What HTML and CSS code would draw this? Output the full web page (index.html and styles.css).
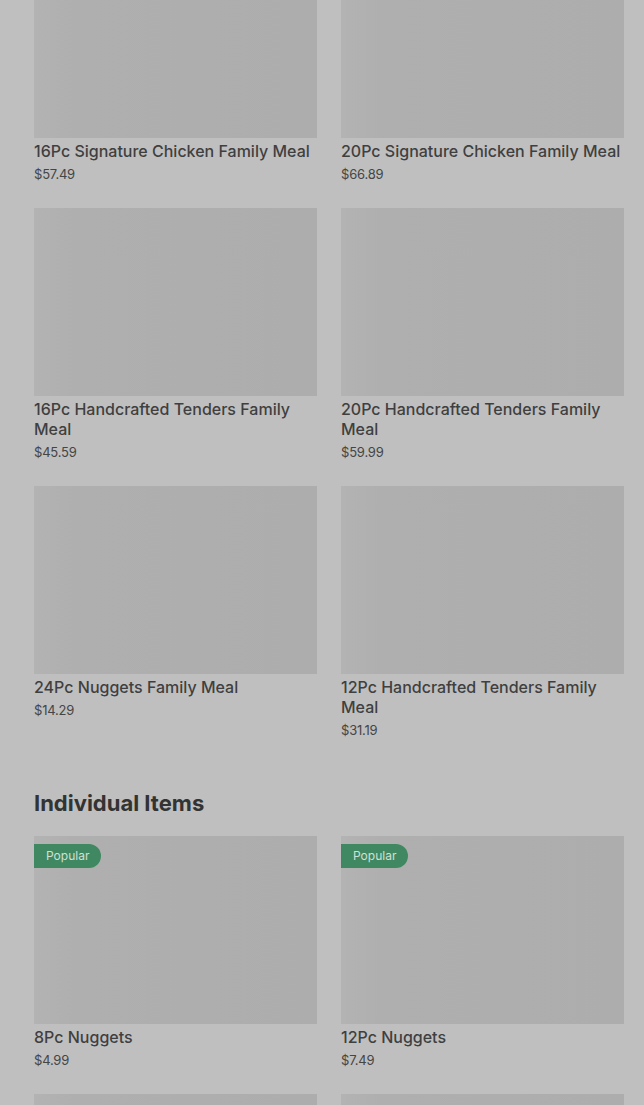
FILE: index.html
```html
<!DOCTYPE html>
<html>
<head>
<meta charset="utf-8">
<link rel="stylesheet" href="styles.css">
</head>
<body>
<main class="page">
  <div class="grid first">
    <div class="card"><div class="thumb"></div><div class="title">16Pc Signature Chicken Family Meal</div><div class="price">$57.49</div></div>
    <div class="card"><div class="thumb"></div><div class="title">20Pc Signature Chicken Family Meal</div><div class="price">$66.89</div></div>
    <div class="card"><div class="thumb"></div><div class="title">16Pc Handcrafted Tenders Family Meal</div><div class="price">$45.59</div></div>
    <div class="card"><div class="thumb"></div><div class="title">20Pc Handcrafted Tenders Family Meal</div><div class="price">$59.99</div></div>
    <div class="card"><div class="thumb"></div><div class="title">24Pc Nuggets Family Meal</div><div class="price">$14.29</div></div>
    <div class="card"><div class="thumb"></div><div class="title">12Pc Handcrafted Tenders Family Meal</div><div class="price">$31.19</div></div>
  </div>
  <h2 class="section-title">Individual Items</h2>
  <div class="grid">
    <div class="card"><div class="thumb"><span class="badge">Popular</span></div><div class="title">8Pc Nuggets</div><div class="price">$4.99</div></div>
    <div class="card"><div class="thumb"><span class="badge">Popular</span></div><div class="title">12Pc Nuggets</div><div class="price">$7.49</div></div>
    <div class="card"><div class="thumb"></div><div class="title">&nbsp;</div><div class="price">&nbsp;</div></div>
    <div class="card"><div class="thumb"></div><div class="title">&nbsp;</div><div class="price">&nbsp;</div></div>
  </div>
</main>
</body>
</html>
```
FILE: styles.css
```css
html, body {
  margin: 0;
  padding: 0;
  background: #bfbfbf;
  overflow: hidden;
  height: 1105px;
}
.page {
  padding: 0 20px 0 34px;
  font-family: Inter, "Liberation Sans", sans-serif;
  color: #3d3d3d;
}
.grid {
  display: grid;
  grid-template-columns: 283px 283px;
  column-gap: 24px;
  row-gap: 24px;
}
.grid.first {
  margin-top: -50px;
}
.card {
  display: flex;
  flex-direction: column;
}
.thumb {
  position: relative;
  height: 188px;
  background: linear-gradient(90deg, #b3b3b3 0px, #afafaf 40px, #adadad 100%);
}
.title {
  margin-top: 3px;
  font-size: 16px;
  line-height: 20px;
  font-weight: 500;
  color: #3f3f3f;
}
.price {
  margin-top: 3px;
  font-size: 13px;
  line-height: 20px;
  color: #454545;
  letter-spacing: -0.2px;
}
.section-title {
  margin: 47px 0 17px;
  font-size: 22px;
  line-height: 32px;
  font-weight: 700;
  letter-spacing: 0;
  color: #333333;
}
.badge {
  position: absolute;
  left: 0;
  top: 8px;
  height: 24px;
  line-height: 24px;
  padding: 0 12px;
  font-size: 12px;
  background: #408862;
  color: #cfe0d5;
  border-radius: 0 12px 12px 0;
}
```
